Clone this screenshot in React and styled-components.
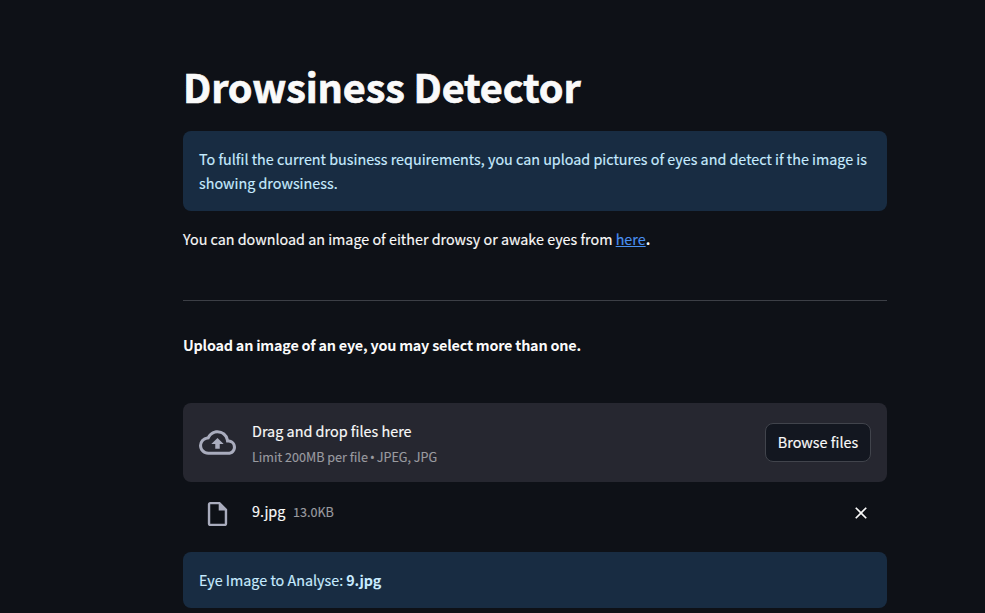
import React from "react";
import styled, { createGlobalStyle } from "styled-components";
import {
  MdOutlineCloudUpload,
  MdOutlineInsertDriveFile,
  MdClose,
} from "react-icons/md";

const GlobalStyle = createGlobalStyle`
  *, *::before, *::after { box-sizing: border-box; }
  html, body { margin: 0; background: #0e1117; overflow: hidden; }
  body {
    color: #fafafa;
    font-family: "Noto Sans CJK SC", "Noto Sans", sans-serif;
    font-size: 14.4px;
    line-height: 24px;
    -webkit-text-stroke: 0.15px currentColor;
  }
`;

const Page = styled.main`
  height: 613px;
  overflow: hidden;
  padding: 59px 98px 0 183px;
  display: flex;
  flex-direction: column;
`;

const Title = styled.h1`
  margin: 0 0 19px;
  font-size: 39.6px;
  font-weight: 700;
  line-height: 53px;
  letter-spacing: -0.12px;
  white-space: nowrap;
  -webkit-text-stroke: 0.7px currentColor;
`;

const Alert = styled.div`
  flex: none;
  padding: 16px;
  border-radius: 8px;
  background: #182c42;
  color: #c7ebff;
  font-size: 14.34px;
`;

const Paragraph = styled.p`
  margin: 16px 0 0;
  font-size: 14.34px;
  white-space: nowrap;
`;

const Link = styled.a`
  color: #4a90f0;
  text-decoration: underline;
`;

const Divider = styled.hr`
  width: 100%;
  margin: 49px 0 32px;
  border: 0;
  border-top: 1px solid #3c3f46;
`;

const Strong = styled.strong`
  font-weight: 700;
  letter-spacing: -0.22px;
  -webkit-text-stroke: 0;
`;

const Prompt = styled.p`
  margin: 0;
  white-space: nowrap;
`;

const Dropzone = styled.section`
  flex: none;
  display: flex;
  align-items: center;
  height: 79px;
  margin-top: 46px;
  padding: 0 16px;
  border-radius: 8px;
  background: #262730;
`;

const CloudIcon = styled(MdOutlineCloudUpload)`
  flex: none;
  width: 37px;
  height: 37px;
  margin-right: 16px;
  color: #a9acbd;
`;

const Instructions = styled.div`
  flex: 1;
  display: flex;
  flex-direction: column;
  gap: 2px;
  padding-top: 4px;
`;

const Muted = styled.small`
  color: #9a9ba0;
  font-size: 12.6px;
`;

const Bullet = styled.span`
  margin: 0 -0.8px;
  font-family: "Noto Sans", sans-serif;
  font-size: 12.6px;
`;

const BrowseButton = styled.button`
  width: 106px;
  height: 39px;
  padding: 0 0 1px;
  border: 1px solid #41444c;
  border-radius: 8px;
  background: #131720;
  color: #fafafa;
  font: inherit;
  white-space: nowrap;
`;

const FileRow = styled.div`
  flex: none;
  display: flex;
  align-items: center;
  height: 70px;
  padding: 0 16px 8px;
`;

const FileIcon = styled(MdOutlineInsertDriveFile)`
  flex: none;
  width: 29px;
  height: 30px;
  margin: 1px 20px 0 4px;
  color: #a9acbd;
`;

const FileMeta = styled.div`
  flex: 1;
  display: flex;
  align-items: center;
  gap: 7.5px;
  padding-bottom: 3px;
`;

const FileName = styled.span`
  padding-bottom: 2px;
`;

const RemoveButton = styled.button`
  display: flex;
  padding: 0;
  border: 0;
  background: none;
  color: #fafafa;
`;

export default function App() {
  return (
    <>
      <GlobalStyle />
      <Page>
        <Title>Drowsiness Detector</Title>
        <Alert>
          To fulfil the current business requirements, you can upload pictures
          of eyes and detect if the image is showing drowsiness.
        </Alert>
        <Paragraph>
          You can download an image of either drowsy or awake eyes from{" "}
          <Link href="#">here</Link>
          <Strong>.</Strong>
        </Paragraph>
        <Divider />
        <Prompt>
          <Strong>
            Upload an image of an eye, you may select more than one.
          </Strong>
        </Prompt>
        <Dropzone>
          <CloudIcon />
          <Instructions>
            <span>Drag and drop files here</span>
            <Muted>
              Limit 200MB per file <Bullet>•</Bullet> JPEG, JPG
            </Muted>
          </Instructions>
          <BrowseButton>Browse files</BrowseButton>
        </Dropzone>
        <FileRow>
          <FileIcon />
          <FileMeta>
            <FileName>9.jpg</FileName>
            <Muted>13.0KB</Muted>
          </FileMeta>
          <RemoveButton aria-label="Remove file">
            <MdClose size={20} />
          </RemoveButton>
        </FileRow>
        <Alert>
          Eye Image to Analyse: <Strong>9.jpg</Strong>
        </Alert>
      </Page>
    </>
  );
}
